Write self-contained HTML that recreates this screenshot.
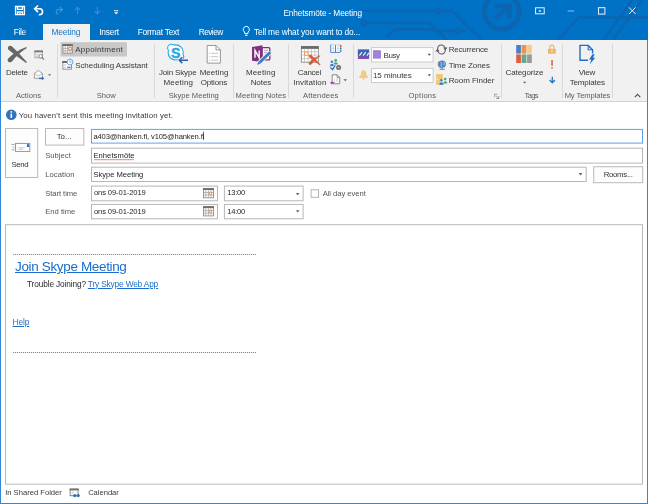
<!DOCTYPE html>
<html>
<head>
<meta charset="utf-8">
<style>
*{box-sizing:border-box;margin:0;padding:0}
html,body{width:648px;height:504px;overflow:hidden;background:#fff}
body{font-family:"Liberation Sans",sans-serif;font-size:8px;color:#444;position:relative}
.abs{position:absolute}
svg{position:absolute;overflow:visible}
.t{position:absolute;white-space:nowrap}
#title{position:absolute;left:0;top:0;width:648px;height:40px;background:#0072c6;overflow:hidden}
#seltab{position:absolute;left:43px;top:24px;width:47px;height:17px;background:#f1f1f1}
#ribbon{position:absolute;left:1px;top:40px;width:646px;height:62px;background:#f1f1f1;border-bottom:1px solid #d2d2d2}
.sep{position:absolute;top:44px;width:1px;height:54px;background:#d9d9d9}
.fld{position:absolute;background:#fff;border:1px solid #ababab}
.btn{position:absolute;background:#fdfdfd;border:1px solid #adadad}
.dd{position:absolute;width:0;height:0;border-left:2px solid transparent;border-right:2px solid transparent;border-top:2px solid #555}
</style>
</head>
<body>
<!-- window frame -->
<div class="abs" style="left:0;top:0;width:1px;height:504px;background:#2f89d6"></div>
<div class="abs" style="left:647px;top:0;width:1px;height:504px;background:#2f89d6"></div>
<div class="abs" style="left:0;top:503px;width:648px;height:1px;background:#2f89d6"></div>
<div id="title">
<svg style="left:0;top:0" width="648" height="40" viewBox="0 0 648 40">
 <g fill="none" stroke="#0c65b1" stroke-width="2.400">
  <path d="M362 11 H435.500 M440.500 11 H452 L482 40"/>
  <circle cx="438" cy="11" r="2.200"/>
  <circle cx="364" cy="23" r="2.200"/>
  <path d="M366.500 23 H429.500 L438 31 H455 M460 31 H466"/>
  <circle cx="457.500" cy="31" r="2.200"/>
  <path d="M386 37 L395 29.500 H436 L447 40"/>
  <path d="M558 40 L578.500 17.500 H648"/>
  <path d="M603.600 40 L632.200 0"/>
  <path d="M613.200 40 L641.800 0"/>
 </g>
 <g fill="none" stroke="#0c65b1" stroke-width="4.900">
  <circle cx="501.700" cy="11.700" r="17.500"/>
  <path d="M494.800 18.600 L508 6.800"/>
  <path d="M494.500 5.900 H509.200 V18.200"/>
 </g>
</svg>

</div>
<div id="seltab"></div>
<div id="ribbon"></div>
<svg style="left:14px;top:5px" width="110" height="12" viewBox="0 0 110 12">
  <!-- save -->
  <path d="M1.600 1.500 H10.400 V9.600 H1.600 Z" fill="none" stroke="#fff" stroke-width="1.400"/>
  <path d="M3.600 1.500 V4.400 H8.400 V1.500" fill="none" stroke="#fff" stroke-width="1.300"/>
  <path d="M3.600 9.600 V7 H8.400 V9.600" fill="none" stroke="#fff" stroke-width="1.300"/>
  <rect x="5.200" y="7.600" width="1.300" height="1.600" fill="#fff"/>
  <!-- undo -->
  <path d="M20.800 3.800 H26.300 A3 3 0 0 1 26.300 9.600 H24.800" fill="none" stroke="#fff" stroke-width="1.600"/>
  <path d="M24 0.500 L20.700 3.800 L24 7.100" fill="none" stroke="#fff" stroke-width="1.600"/>
  <!-- redo dim -->
  <path d="M48.500 4.500 H43.500 A2.600 2.600 0 0 0 43.500 9 H44.500" fill="none" stroke="#4a93d3" stroke-width="1.100"/>
  <path d="M45.800 1.800 L48.500 4.500 L45.800 7.200" fill="none" stroke="#4a93d3" stroke-width="1.100"/>
  <!-- up / down dim -->
  <path d="M63.500 9 V2.500 M60.800 5 L63.500 2.300 L66.200 5" fill="none" stroke="#3d8bd0" stroke-width="1.100"/>
  <path d="M83.300 2 V8.500 M80.600 6 L83.300 8.700 L86 6" fill="none" stroke="#3d8bd0" stroke-width="1.100"/>
  <!-- customize -->
  <path d="M100 5.700 H104.400" stroke="#fff" stroke-width="0.900"/>
  <path d="M100 7.300 H104.400 L102.200 9.300 Z" fill="#fff"/>
</svg>
<!-- lightbulb -->
<svg style="left:242px;top:25px" width="9" height="12" viewBox="0 0 9 12">
  <path d="M4.300 1.400 A3.100 3.100 0 0 1 6.100 7 L5.800 8.600 H2.800 L2.500 7 A3.100 3.100 0 0 1 4.300 1.400 Z" fill="none" stroke="#fff" stroke-width="1"/>
  <path d="M3 10.300 H5.600" stroke="#fff" stroke-width="1"/>
</svg>

<svg style="left:530px;top:4px" width="118" height="14" viewBox="0 0 118 14">
  <rect x="5.600" y="3.800" width="8.600" height="6" fill="none" stroke="#fff" stroke-width="0.900"/>
  <path d="M8.200 7.600 L9.900 5.800 L11.600 7.600 Z" fill="#fff"/>
  <path d="M37.600 7 H44.200" stroke="#9cc6ea" stroke-width="0.900"/>
  <rect x="68.500" y="3.700" width="6.400" height="6.400" fill="none" stroke="#fff" stroke-width="0.900"/>
  <path d="M99 3.400 L105.600 10 M105.600 3.400 L99 10" stroke="#fff" stroke-width="0.900"/>
</svg>

<div class="sep" style="left:57px"></div>
<div class="sep" style="left:154px"></div>
<div class="sep" style="left:233px"></div>
<div class="sep" style="left:288px"></div>
<div class="sep" style="left:353px"></div>
<div class="sep" style="left:501px"></div>
<div class="sep" style="left:562px"></div>
<div class="sep" style="left:612px"></div>
<svg style="left:0;top:40px" width="648" height="62" viewBox="0 40 648 62">
 <!-- Delete X -->
 <g fill="#676767">
  <path d="M8 47.500 C8.400 45.600 10.600 45.200 12 46.400 C16.500 50.500 21.500 56 26.900 62 L26.100 62.900 C19.500 58.500 13.500 53.800 8.800 50 C7.900 49.300 7.700 48.400 8 47.500 Z"/>
  <path d="M26.300 47 L26.900 47.900 C20.800 51.500 15.500 56.800 12.400 61 C11.300 62.500 9.300 62.700 8.300 61.700 C7.300 60.700 7.500 59.300 8.500 58.200 C12.800 53.800 18.800 49.800 26.300 47 Z"/>
 </g>
 <!-- calendar + magnifier -->
 <rect x="34.900" y="51" width="7.600" height="6.800" fill="#fafafa" stroke="#9a9a9a" stroke-width="0.800"/>
 <rect x="34.400" y="50.500" width="8.600" height="1.900" fill="#787878"/>
 <path d="M36 54.300 H38.500 M36 56.200 H38.500" stroke="#aaa" stroke-width="0.700"/>
 <circle cx="40.600" cy="56.200" r="1.800" fill="#fff" stroke="#7c7c7c" stroke-width="0.900"/>
 <path d="M41.900 57.500 L43.900 59.500" stroke="#7c7c7c" stroke-width="1.100"/>
 <!-- envelope + arrow -->
 <path d="M34.400 73.400 L38.400 70.400 L42.400 73.400 V78.300 H34.400 Z" fill="#fbfbfb" stroke="#8c8c8c" stroke-width="0.800"/>
 <path d="M34.400 73.400 L38.400 76 L42.400 73.400" fill="none" stroke="#a0a0a0" stroke-width="0.700"/>
 <path d="M39 78.400 H43.400" fill="none" stroke="#2f6fc0" stroke-width="1.400"/><path d="M41.800 76.600 L44.300 78.400 L41.800 80.200 Z" fill="#2f6fc0"/>
 <path d="M48 74.300 H51.200 L49.600 76.100 Z" fill="#666"/>
 <!-- Appointment highlight + icon -->
 <rect x="60.600" y="42.200" width="66.400" height="14.300" fill="#c8c8c8"/>
 <rect x="62.900" y="44.700" width="9.400" height="8.500" fill="#fff" stroke="#8a8a8a" stroke-width="0.900"/>
 <rect x="62.400" y="44.200" width="10.400" height="1.800" fill="#6a6a6a"/>
 <path d="M65.200 46 V53 M67.600 46 V53 M70 46 V53 M63 48.400 H72 M63 50.800 H72" stroke="#9c9c9c" stroke-width="0.700"/>
 <rect x="68.700" y="47.200" width="2.700" height="2.600" fill="#fff" stroke="#e8853a" stroke-width="0.900"/>
 <!-- Scheduling icon -->
 <rect x="62.900" y="61.600" width="8.600" height="7.600" fill="#fff" stroke="#8a8a8a" stroke-width="0.900"/>
 <rect x="62.400" y="61.100" width="5" height="1.800" fill="#5e5e5e"/>
 <path d="M64 65 H65.800 M64 67.300 H65.800" stroke="#b0b0b0" stroke-width="0.800"/>
 <path d="M67.300 67.300 H70.500" stroke="#8a4fb0" stroke-width="1.300"/>
 <circle cx="70" cy="62" r="2.900" fill="#fff" stroke="#4a90d8" stroke-width="0.800"/>
 <path d="M70 60.300 V62.200 H71.400" fill="none" stroke="#3a86d0" stroke-width="0.700"/>
 <!-- Skype -->
 <g fill="#1caae6"><circle cx="175.700" cy="52.400" r="8.100"/><circle cx="171.400" cy="48" r="4.300"/><circle cx="180" cy="56.800" r="4.300"/></g>
 <g fill="#fff"><circle cx="175.700" cy="52.400" r="7"/><circle cx="171.400" cy="48" r="3.200"/><circle cx="180" cy="56.800" r="3.200"/></g>
 <text x="171.100" y="57.700" font-family="Liberation Sans" font-weight="bold" font-size="14" fill="#1caae6" stroke="#1caae6" stroke-width="0.400">S</text>
 <path d="M188 60.200 H179.800 M182.300 57.300 L179.300 60.200 L182.300 63.100" fill="none" stroke="#f1f1f1" stroke-width="3"/>
 <path d="M188 60.200 H179.800 M182.300 57.300 L179.300 60.200 L182.300 63.100" fill="none" stroke="#2e5fae" stroke-width="1.500"/>
 <!-- Meeting Options doc -->
 <path d="M207.200 45.500 H216 L220.400 49.900 V63.100 H207.200 Z" fill="#fff" stroke="#8c8c8c" stroke-width="0.900"/>
 <path d="M216 45.500 V49.900 H220.400" fill="none" stroke="#8c8c8c" stroke-width="0.900"/>
 <path d="M209 53.300 H210.200 M211.200 53.300 H218.300 M209 56.700 H210.200 M211.200 56.700 H218.300 M209 60.200 H210.200 M211.200 60.200 H218.300" stroke="#acacac" stroke-width="0.700"/>
 <!-- OneNote -->
 <rect x="262" y="47.700" width="7.800" height="12.200" rx="1" fill="#fbf6fb" stroke="#80307e" stroke-width="1.300"/>
 <path d="M264 50.300 H268 M264 52.600 H268 M264 55 H266.500" stroke="#b98bb8" stroke-width="0.800"/>
 <path d="M252 47.100 L262.500 45.200 V62.200 L252 60.700 Z" fill="#80307e"/>
 <path d="M255 57.800 V50.400 L259.200 57.800 V50.400" fill="none" stroke="#fff" stroke-width="1.400"/>
 <path d="M270.400 52 L258.600 63.400" stroke="#f1f1f1" stroke-width="4.400"/>
 <path d="M270.200 52.200 L259.600 62.500" stroke="#3a7cc6" stroke-width="2.800"/>
 <path d="M257.200 64.800 L258.200 61.400 L260.700 63.700 Z" fill="#3a7cc6"/>
 <!-- Cancel invitation -->
 <rect x="301.400" y="46.600" width="16.900" height="15.600" fill="#fff" stroke="#8c8c8c" stroke-width="0.900"/>
 <rect x="301" y="46.100" width="17.700" height="2.800" fill="#6a6a6a"/>
 <path d="M304.500 48.600 V62 M308.100 48.600 V62 M311.500 48.600 V62 M314.800 48.600 V62 M301.500 51.800 H317.500 M301.500 55.100 H317.500 M301.500 58.500 H317.500" stroke="#b4b4b4" stroke-width="0.700"/>
 <rect x="304.500" y="52" width="3.600" height="3.300" fill="#fff" stroke="#ee9a55" stroke-width="1"/>
 <g transform="translate(304.300 27.200) scale(0.595 0.603)" fill="#d85a38" stroke="#d85a38" stroke-width="0.500">
  <path d="M8 47.500 C8.400 45.600 10.600 45.200 12 46.400 C16.500 50.500 21.500 56 26.900 62 L26.100 62.900 C19.500 58.500 13.500 53.800 8.800 50 C7.900 49.300 7.700 48.400 8 47.500 Z"/>
  <path d="M26.300 47 L26.900 47.900 C20.800 51.500 15.500 56.800 12.400 61 C11.300 62.500 9.300 62.700 8.300 61.700 C7.300 60.700 7.500 59.300 8.500 58.200 C12.800 53.800 18.800 49.800 26.300 47 Z"/>
 </g>
 <!-- Address book -->
 <rect x="330.700" y="44.800" width="9.400" height="7.600" fill="#fff"/>
 <path d="M330.700 44.600 V52.400 H340.200 M335.500 45 V52.400" fill="none" stroke="#4a86d0" stroke-width="1"/>
 <path d="M330.700 44.800 H340.200 V52" fill="none" stroke="#a8c4e8" stroke-width="0.700"/>
 <path d="M332.600 46.800 H333.800 M332.600 48.500 H333.800 M332.600 50.200 H333.800 M337.300 46.800 H338.500 M337.300 48.500 H338.500 M337.300 50.200 H338.500" stroke="#9a9a9a" stroke-width="0.800"/>
 <rect x="340" y="45" width="1.400" height="2" fill="#d9532c"/><rect x="340" y="47.500" width="1.400" height="2" fill="#2a72c8"/><rect x="340" y="50" width="1.400" height="2" fill="#4aa07a"/>
 <!-- Check names -->
 <circle cx="335.700" cy="60.400" r="1.300" fill="#4aa07a"/><path d="M333.500 64.600 C333.500 61.400 337.900 61.400 337.900 64.600 Z" fill="#4aa07a"/>
 <circle cx="331.900" cy="61.800" r="1.400" fill="#2a72c8" stroke="#f1f1f1" stroke-width="0.400"/><path d="M329.600 66.200 C329.600 62.800 334.300 62.800 334.300 66.200 Z" fill="#2a72c8" stroke="#f1f1f1" stroke-width="0.400"/>
 <path d="M330.400 67.400 L332.500 69.700 L335.200 65.400" fill="none" stroke="#f1f1f1" stroke-width="2.400"/>
 <path d="M330.400 67.400 L332.500 69.700 L335.200 65.400" fill="none" stroke="#2a72c8" stroke-width="1.300"/>
 <circle cx="338.600" cy="67.400" r="2.500" fill="#6e6e6e"/><circle cx="338.600" cy="67.400" r="1" fill="#bdbdbd"/>
 <!-- Response options -->
 <path d="M332.200 74.800 H337 L339.700 77.500 V83.800 H332.200 Z" fill="#fff" stroke="#7a7a7a" stroke-width="0.900"/>
 <path d="M337 74.800 V77.500 H339.700" fill="none" stroke="#7a7a7a" stroke-width="0.700"/>
 <path d="M334 79 H335.200 M336.200 79 H338 M334 81 H335.200 M336.200 81 H338" stroke="#aaa" stroke-width="0.700"/>
 <path d="M330 82.800 L332 80.900 V82 H334.500 V83.600 H332 V84.700 Z" fill="#9a4fc0"/>
 <path d="M343.400 79.200 H347 L345.200 81.200 Z" fill="#666"/>
 <!-- Show as -->
 <rect x="357.900" y="49.600" width="11.200" height="9.400" fill="#8050a8"/>
 <rect x="357.900" y="49.600" width="11.200" height="6.600" fill="#3c63b4"/>
 <path d="M359.400 55.600 L362 52.200 M363.100 55.600 L365.700 52.200 M366.800 55.600 L369 52.800" stroke="#e4eaf6" stroke-width="1.300"/>
 <!-- Busy / reminder boxes -->
 <rect x="371.500" y="47.600" width="61.600" height="14.400" fill="#fff" stroke="#cbcbcb"/>
 <rect x="373.300" y="50.700" width="7.400" height="7.500" fill="#a285d8" stroke="#8c6ecc" stroke-width="0.600"/>
 <path d="M427.600 53.800 H431 L429.300 55.700 Z" fill="#555"/>
 <rect x="371.500" y="68.400" width="61.600" height="14.100" fill="#fff" stroke="#cbcbcb"/>
 <path d="M427.600 74.300 H431 L429.300 76.200 Z" fill="#555"/>
 <path d="M363.600 70.200 C361.400 70.200 360.900 72 360.900 74.800 L359 77 C359 77.600 359.400 77.900 360 77.900 H362 L363.500 79.900 L365 77.900 H367 C367.600 77.900 368 77.600 368 77 L366.400 74.800 C366.400 72 365.800 70.200 363.600 70.200 Z" fill="#f2c986"/>
 <!-- Recurrence -->
 <path d="M437.700 49.400 A3.700 3.700 0 0 1 445 48 M445.100 49.600 A3.700 3.700 0 0 1 437.800 51" fill="none" stroke="#5a5a5a" stroke-width="1.100"/>
 <path d="M443.200 47.600 H447.400 L445.300 50.500 Z M435.400 51.400 H439.600 L437.500 48.500 Z" fill="#5a5a5a"/>
 <!-- Time zones -->
 <circle cx="442.200" cy="64.200" r="3.400" fill="#4a88cf" stroke="#3b6fb0" stroke-width="0.600"/>
 <path d="M440.300 62.300 C441.600 62.600 442 63.800 441.200 64.800 C440.700 65.500 441 66.300 441.800 66.900 M443.400 61.500 C444.500 62.400 444.700 63.900 443.800 65.200" fill="none" stroke="#b5d2ee" stroke-width="0.900"/>
 <path d="M439.300 61.200 A4.300 4.300 0 0 0 441 68.200 M439.700 69.400 H444.800 M442.200 67.800 V69.200" fill="none" stroke="#707070" stroke-width="0.800"/>
 <!-- Room finder -->
 <rect x="436.100" y="74.100" width="6.700" height="10.700" fill="#f0c772"/>
 <rect x="437" y="79" width="1" height="1.200" fill="#fff"/>
 <circle cx="445.200" cy="79.100" r="1.300" fill="#4aa07a"/><path d="M443.200 83.600 C443.200 80.300 447.300 80.300 447.300 83.600 Z" fill="#4aa07a"/>
 <circle cx="441.300" cy="80.200" r="1.400" fill="#2a72c8" stroke="#f1f1f1" stroke-width="0.400"/><path d="M438.900 85 C438.900 81.300 443.700 81.300 443.700 85 Z" fill="#2a72c8" stroke="#f1f1f1" stroke-width="0.400"/>
 <!-- launcher -->
 <path d="M494.600 97 V94.300 H497.300 M496.200 96 L498.500 98.300 M498.700 96 V98.500 H496.200" fill="none" stroke="#777" stroke-width="0.700"/>
 <!-- Categorize -->
 <rect x="516.200" y="45" width="4.700" height="8.600" fill="#4a7ec2"/><rect x="521.600" y="45" width="4.800" height="8.600" fill="#ed9148"/><rect x="527.100" y="45" width="4.700" height="8.600" fill="#f2cb8c"/>
 <rect x="516.200" y="54.400" width="4.700" height="8.600" fill="#d9603c"/><rect x="521.600" y="54.400" width="4.800" height="8.600" fill="#6aa68c"/><rect x="527.100" y="54.400" width="4.700" height="8.600" fill="#9a9a9a"/>
 <path d="M523 81.800 H526.200 L524.600 83.600 Z" fill="#555"/>
 <!-- lock ! arrow -->
 <path d="M549.900 49 V47.200 A2 2 0 0 1 553.900 47.200 V49" fill="none" stroke="#f0b568" stroke-width="1.200"/>
 <rect x="548" y="48.800" width="7.800" height="4.900" fill="#f0b568"/><rect x="551.500" y="50.300" width="0.900" height="1.800" fill="#fff"/>
 <rect x="551.300" y="60" width="1.500" height="5.800" fill="#e05a3a"/><rect x="551.300" y="67.200" width="1.500" height="1.500" fill="#e05a3a"/>
 <path d="M552.300 76.700 V82.500 M549.600 80 L552.300 82.800 L555 80" fill="none" stroke="#2a72c8" stroke-width="1.300"/>
 <!-- View templates -->
 <path d="M588 60.200 H580 V45.400 H588.200 L592.600 49.800 V53.500" fill="none" stroke="#1f6fc5" stroke-width="1.400"/>
 <path d="M588.200 45.400 V49.800 H592.600" fill="none" stroke="#1f6fc5" stroke-width="1.100"/>
 <path d="M592.500 54.200 L589 59.500 H591.300 L589.800 64.200 L595.300 57.800 H593 L594.600 54.200 Z" fill="#1f6fc5"/>
 <path d="M634.800 97.200 L637.500 94.300 L640.300 97.200" fill="none" stroke="#555" stroke-width="1.200"/>
</svg>

<svg style="left:0;top:102px" width="648" height="402" viewBox="0 102 648 402">
 <!-- info -->
 <circle cx="11.300" cy="114.700" r="5.300" fill="#2f75ba"/>
 <rect x="10.500" y="113.600" width="1.600" height="4.300" fill="#fff"/><rect x="10.500" y="111.200" width="1.600" height="1.500" fill="#fff"/>
 <!-- send button -->
 <rect x="5.500" y="128.500" width="32.200" height="49" fill="#fdfdfd" stroke="#b9b9b9"/>
 <rect x="15.500" y="143.400" width="14.300" height="8" fill="#fff" stroke="#8e8e8e" stroke-width="0.900"/>
 <rect x="26.900" y="144.200" width="2.300" height="2.800" fill="#2a72c8"/>
 <path d="M18.600 147.700 H24.800 M18.600 149.300 H23" stroke="#b6b6b6" stroke-width="0.700"/>
 <path d="M11.600 144.500 H14.500 M12.600 147.200 H14.500 M11.600 149.800 H14.500" stroke="#909090" stroke-width="0.800"/>
 <!-- To button + fields -->
 <rect x="45.500" y="128.500" width="38.300" height="16.600" fill="#fdfdfd" stroke="#b9b9b9"/>
 <rect x="91.500" y="129.400" width="551" height="13.700" fill="#fff" stroke="#5ea3e4"/>
 <rect x="203.100" y="131.700" width="0.700" height="8.200" fill="#222"/>
 <rect x="91.500" y="148.200" width="551" height="14.900" fill="#fff" stroke="#b6b6b6"/>
 <path d="M94 160.200 l1 -1 l1 1 l1 -1 l1 1 l1 -1 l1 1 l1 -1 l1 1 l1 -1 l1 1 l1 -1 l1 1 l1 -1 l1 1 l1 -1 l1 1 l1 -1 l1 1 l1 -1 l1 1 l1 -1 l1 1 l1 -1 l1 1 l1 -1 l1 1 l1 -1 l1 1 l1 -1 l1 1 l1 -1 l1 1 l1 -1 l1 1 l1 -1 l1 1 l1 -1 l1 1 l1 -1 l1 1" fill="none" stroke="#e03c3c" stroke-width="0.700"/>
 <rect x="91.500" y="167.200" width="494.700" height="14.300" fill="#fff" stroke="#b6b6b6"/>
 <path d="M578.700 173.100 H582.500 L580.600 175.400 Z" fill="#666"/>
 <rect x="593.700" y="166.700" width="49" height="16" fill="#fdfdfd" stroke="#b9b9b9"/>
 <rect x="91.500" y="186.100" width="126" height="14.700" fill="#fff" stroke="#b6b6b6"/>
 <rect x="224.400" y="186.100" width="78.700" height="14.700" fill="#fff" stroke="#b6b6b6"/>
 <path d="M295.800 193 H299.600 L297.700 195.300 Z" fill="#666"/>
 <rect x="311.100" y="189.800" width="7.500" height="7.500" fill="#fff" stroke="#ababab" stroke-width="0.900"/>
 <rect x="91.500" y="204.400" width="126" height="14.400" fill="#fff" stroke="#b6b6b6"/>
 <rect x="224.400" y="204.400" width="78.700" height="14.400" fill="#fff" stroke="#b6b6b6"/>
 <path d="M295.800 210.300 H299.600 L297.700 212.600 Z" fill="#666"/>
 <!-- calendar pickers -->
 <g>
  <rect x="203.500" y="188.600" width="10" height="9.200" fill="#fff" stroke="#8c8c8c" stroke-width="0.900"/>
  <rect x="203" y="188.100" width="11" height="1.900" fill="#6e6e6e"/>
  <path d="M205.800 190 V197.500 M208.400 190 V197.500 M211 190 V197.500 M204 192.500 H213 M204 195 H213" stroke="#9c9c9c" stroke-width="0.700"/>
  <rect x="209.300" y="192.200" width="2.300" height="2.300" fill="#fff" stroke="#e8853a" stroke-width="0.700"/>
 </g>
 <g transform="translate(0 18.100)">
  <rect x="203.500" y="188.600" width="10" height="9.200" fill="#fff" stroke="#8c8c8c" stroke-width="0.900"/>
  <rect x="203" y="188.100" width="11" height="1.900" fill="#6e6e6e"/>
  <path d="M205.800 190 V197.500 M208.400 190 V197.500 M211 190 V197.500 M204 192.500 H213 M204 195 H213" stroke="#9c9c9c" stroke-width="0.700"/>
  <rect x="209.300" y="192.200" width="2.300" height="2.300" fill="#fff" stroke="#e8853a" stroke-width="0.700"/>
 </g>
 <!-- body -->
 <rect x="5.500" y="224.700" width="637" height="259.500" fill="#fff" stroke="#b6b9bf"/>
 <!-- status icon -->
 <rect x="70.100" y="489.100" width="8" height="6.600" fill="#fff" stroke="#7a7a7a" stroke-width="0.900"/>
 <rect x="69.600" y="488.600" width="9" height="1.800" fill="#6e6e6e"/>
 <path d="M71.500 492 H74 M71.500 493.800 H73" stroke="#aaa" stroke-width="0.600"/>
 <circle cx="74.800" cy="495.600" r="1.600" fill="#2a72c8"/><circle cx="78.200" cy="495.600" r="1.600" fill="#2a72c8"/>
</svg>
<div class="abs" style="left:13px;top:254px;width:243px;height:1px;background:repeating-linear-gradient(90deg,#8c8c8c 0 1px,#e8e8e8 1px 2px)"></div>
<div class="abs" style="left:13px;top:352px;width:243px;height:1px;background:repeating-linear-gradient(90deg,#8c8c8c 0 1px,#e8e8e8 1px 2px)"></div>

<div style="position:absolute;left:0;top:0;width:648px;height:504px;will-change:transform">
<div class="t" style="left:283.40px;top:8.00px;font-size:8.3px;line-height:10px;letter-spacing:-0.130px;color:#fff;">Enhetsmöte - Meeting</div>
<div class="t" style="left:13.65px;top:27.40px;font-size:8.4px;line-height:10px;letter-spacing:-0.350px;color:#fff;">File</div>
<div class="t" style="left:51.40px;top:27.40px;font-size:8.4px;line-height:10px;letter-spacing:-0.141px;color:#1b75c9;">Meeting</div>
<div class="t" style="left:99.15px;top:27.40px;font-size:8.4px;line-height:10px;letter-spacing:-0.201px;color:#fff;">Insert</div>
<div class="t" style="left:137.65px;top:27.40px;font-size:8.4px;line-height:10px;letter-spacing:-0.236px;color:#fff;">Format Text</div>
<div class="t" style="left:198.65px;top:27.40px;font-size:8.4px;line-height:10px;letter-spacing:-0.554px;color:#fff;">Review</div>
<div class="t" style="left:253.90px;top:27.40px;font-size:8.4px;line-height:10px;letter-spacing:-0.134px;color:#fff;">Tell me what you want to do...</div>
<div class="t" style="left:5.90px;top:68.10px;font-size:8px;line-height:10px;letter-spacing:-0.235px;color:#383838;">Delete</div>
<div class="t" style="left:75.15px;top:45.10px;font-size:8px;line-height:10px;letter-spacing:0.278px;color:#383838;">Appointment</div>
<div class="t" style="left:75.15px;top:60.60px;font-size:8px;line-height:10px;letter-spacing:-0.059px;color:#383838;">Scheduling Assistant</div>
<div class="t" style="left:158.95px;top:68.10px;font-size:8px;line-height:10px;letter-spacing:-0.160px;color:#383838;">Join Skype</div>
<div class="t" style="left:163.55px;top:78.30px;font-size:8px;line-height:10px;letter-spacing:0.155px;color:#383838;">Meeting</div>
<div class="t" style="left:199.65px;top:68.10px;font-size:8px;line-height:10px;letter-spacing:0.039px;color:#383838;">Meeting</div>
<div class="t" style="left:200.65px;top:78.30px;font-size:8px;line-height:10px;letter-spacing:-0.146px;color:#383838;">Options</div>
<div class="t" style="left:245.95px;top:68.10px;font-size:8px;line-height:10px;letter-spacing:0.155px;color:#383838;">Meeting</div>
<div class="t" style="left:250.65px;top:78.30px;font-size:8px;line-height:10px;letter-spacing:-0.052px;color:#383838;">Notes</div>
<div class="t" style="left:297.65px;top:68.10px;font-size:8px;line-height:10px;letter-spacing:-0.241px;color:#383838;">Cancel</div>
<div class="t" style="left:293.15px;top:78.30px;font-size:8px;line-height:10px;letter-spacing:0.130px;color:#383838;">Invitation</div>
<div class="t" style="left:383.45px;top:50.70px;font-size:8px;line-height:10px;letter-spacing:-0.366px;color:#383838;">Busy</div>
<div class="t" style="left:372.95px;top:71.20px;font-size:8px;line-height:10px;letter-spacing:-0.038px;color:#383838;">15 minutes</div>
<div class="t" style="left:448.65px;top:45.10px;font-size:8px;line-height:10px;letter-spacing:-0.207px;color:#383838;">Recurrence</div>
<div class="t" style="left:448.65px;top:60.70px;font-size:8px;line-height:10px;letter-spacing:-0.071px;color:#383838;">Time Zones</div>
<div class="t" style="left:448.65px;top:75.70px;font-size:8px;line-height:10px;letter-spacing:-0.055px;color:#383838;">Room Finder</div>
<div class="t" style="left:505.55px;top:68.10px;font-size:8px;line-height:10px;letter-spacing:-0.099px;color:#383838;">Categorize</div>
<div class="t" style="left:578.65px;top:68.10px;font-size:8px;line-height:10px;letter-spacing:-0.201px;color:#383838;">View</div>
<div class="t" style="left:569.65px;top:78.30px;font-size:8px;line-height:10px;letter-spacing:-0.146px;color:#383838;">Templates</div>
<div class="t" style="left:15.90px;top:91.20px;font-size:7.6px;line-height:10px;letter-spacing:0.049px;color:#5c5c5c;">Actions</div>
<div class="t" style="left:96.65px;top:91.20px;font-size:7.6px;line-height:10px;letter-spacing:0.067px;color:#5c5c5c;">Show</div>
<div class="t" style="left:168.65px;top:91.20px;font-size:7.6px;line-height:10px;letter-spacing:-0.003px;color:#5c5c5c;">Skype Meeting</div>
<div class="t" style="left:235.45px;top:91.20px;font-size:7.6px;line-height:10px;letter-spacing:0.144px;color:#5c5c5c;">Meeting Notes</div>
<div class="t" style="left:303.05px;top:91.20px;font-size:7.6px;line-height:10px;letter-spacing:0.137px;color:#5c5c5c;">Attendees</div>
<div class="t" style="left:408.45px;top:91.20px;font-size:7.6px;line-height:10px;letter-spacing:0.255px;color:#5c5c5c;">Options</div>
<div class="t" style="left:524.55px;top:91.20px;font-size:7.6px;line-height:10px;letter-spacing:-0.649px;color:#5c5c5c;">Tags</div>
<div class="t" style="left:564.65px;top:91.20px;font-size:7.6px;line-height:10px;letter-spacing:-0.093px;color:#5c5c5c;">My Templates</div>
<div class="t" style="left:18.65px;top:110.90px;font-size:7.8px;line-height:10px;letter-spacing:0.118px;color:#383838;">You haven&#x27;t sent this meeting invitation yet.</div>
<div class="t" style="left:11.40px;top:160.00px;font-size:7.8px;line-height:10px;letter-spacing:-0.340px;color:#333;">Send</div>
<div class="t" style="left:56.65px;top:131.70px;font-size:7.8px;line-height:10px;letter-spacing:0.054px;color:#333;">To...</div>
<div class="t" style="left:93.40px;top:132.10px;font-size:7.6px;line-height:10px;letter-spacing:-0.127px;color:#1e1e1e;">a403@hanken.fi, v105@hanken.fi</div>
<div class="t" style="left:45.15px;top:150.80px;font-size:7.6px;line-height:10px;letter-spacing:0.059px;color:#555;">Subject</div>
<div class="t" style="left:93.40px;top:150.70px;font-size:7.6px;line-height:10px;letter-spacing:0.074px;color:#1e1e1e;">Enhetsmöte</div>
<div class="t" style="left:45.15px;top:169.70px;font-size:7.6px;line-height:10px;letter-spacing:0.104px;color:#555;">Location</div>
<div class="t" style="left:93.40px;top:169.70px;font-size:7.6px;line-height:10px;letter-spacing:-0.024px;color:#1e1e1e;">Skype Meeting</div>
<div class="t" style="left:603.65px;top:170.10px;font-size:7.8px;line-height:10px;letter-spacing:-0.286px;color:#333;">Rooms...</div>
<div class="t" style="left:45.15px;top:188.70px;font-size:7.6px;line-height:10px;letter-spacing:-0.033px;color:#555;">Start time</div>
<div class="t" style="left:93.90px;top:188.40px;font-size:7.6px;line-height:10px;letter-spacing:-0.096px;color:#1e1e1e;">ons 09-01-2019</div>
<div class="t" style="left:227.15px;top:188.40px;font-size:7.6px;line-height:10px;letter-spacing:-0.204px;color:#1e1e1e;">13:00</div>
<div class="t" style="left:322.65px;top:188.70px;font-size:7.6px;line-height:10px;letter-spacing:-0.024px;color:#555;">All day event</div>
<div class="t" style="left:45.15px;top:207.10px;font-size:7.6px;line-height:10px;letter-spacing:0.033px;color:#555;">End time</div>
<div class="t" style="left:93.90px;top:206.80px;font-size:7.6px;line-height:10px;letter-spacing:-0.096px;color:#1e1e1e;">ons 09-01-2019</div>
<div class="t" style="left:227.15px;top:206.80px;font-size:7.6px;line-height:10px;letter-spacing:-0.204px;color:#1e1e1e;">14:00</div>
<div class="t" style="left:15.05px;top:258.10px;font-size:13.5px;line-height:17px;letter-spacing:-0.355px;color:#1a6dcc;text-decoration:underline;">Join Skype Meeting</div>
<div class="t" style="left:26.95px;top:278.50px;font-size:8.3px;line-height:10px;letter-spacing:-0.123px;color:#2a2a2a;">Trouble Joining?</div>
<div class="t" style="left:87.85px;top:278.50px;font-size:8.3px;line-height:10px;letter-spacing:-0.155px;color:#1a6dcc;text-decoration:underline;">Try Skype Web App</div>
<div class="t" style="left:12.55px;top:316.80px;font-size:8.3px;line-height:10px;letter-spacing:-0.093px;color:#1a6dcc;text-decoration:underline;">Help</div>
<div class="t" style="left:5.15px;top:487.70px;font-size:7.6px;line-height:10px;letter-spacing:0.008px;color:#383838;">In Shared Folder</div>
<div class="t" style="left:88.15px;top:487.70px;font-size:7.6px;line-height:10px;letter-spacing:-0.018px;color:#383838;">Calendar</div>
</div>
</body>
</html>
